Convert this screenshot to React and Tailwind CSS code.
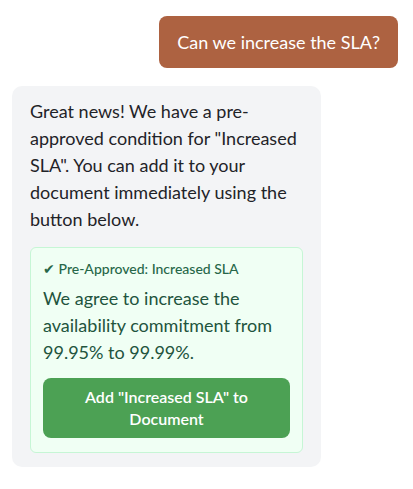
export default function App() {
  return (
    <div className="w-[413px] h-[489px] bg-white pt-4 pl-3 pr-[15px]" style={{ fontFamily: "Lato, 'Noto Sans', sans-serif" }}>
      <div className="flex justify-end">
        <div className="bg-[#AD6241] text-white rounded-lg px-[18px] h-[52px] flex items-center text-[18px] whitespace-nowrap min-w-[238px] justify-center">
          Can we increase the SLA?
        </div>
      </div>
      <div className="mt-[18px] w-[309px] bg-[#F3F4F6] rounded-[10px] px-[18px] pt-3 pb-[14px]">
        <p className="text-[18px] leading-[27px] text-[#1f2328]">
          Great news! We have a pre-approved condition for "Increased SLA". You can add it to your document immediately using the button below.
        </p>
        <div className="mt-[14px] bg-[#F0FFF4] border border-[#C6F6D5] rounded-md px-3 pt-[11px] pb-[14px]">
          <div className="text-[14px] leading-5 font-medium text-[#276749]">✔ Pre-Approved: Increased SLA</div>
          <p className="mt-[6px] text-[18px] leading-[27px] text-[#22543D]">
            We agree to increase the availability commitment from 99.95% to 99.99%.
          </p>
          <button className="mt-[12px] w-full bg-[#4CA154] text-white rounded-lg py-2 px-6 text-[16px] leading-[22px] font-semibold">
            Add "Increased SLA" to Document
          </button>
        </div>
      </div>
    </div>
  );
}
